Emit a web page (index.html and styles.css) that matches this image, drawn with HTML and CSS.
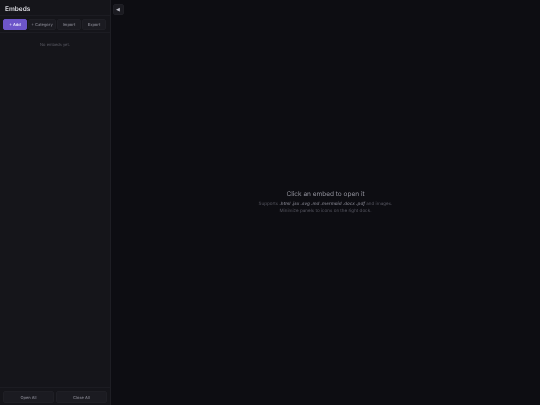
FILE: index.html
```html
<!DOCTYPE html>
<html lang="en">
<head>
<meta charset="utf-8">
<title>Embeds</title>
<link rel="stylesheet" href="styles.css">
</head>
<body>
<div class="app">
  <aside class="sidebar">
    <header class="side-head"><h1>Embeds</h1></header>
    <div class="toolbar">
      <button class="btn primary">+ Add</button>
      <button class="btn wide">+ Category</button>
      <button class="btn">Import</button>
      <button class="btn">Export</button>
    </div>
    <div class="list"><p class="empty">No embeds yet.</p></div>
    <footer class="side-foot">
      <button class="btn grow">Open All</button>
      <button class="btn grow">Close All</button>
    </footer>
  </aside>
  <main class="main">
    <button class="collapse">◀</button>
    <div class="center">
      <h2>Click an embed to open it</h2>
      <p>Supports <em>.html .jsx .svg .md .mermaid .docx .pdf</em> and images.</p>
      <p>Minimize panels to icons on the right dock.</p>
    </div>
  </main>
</div>
</body>
</html>
```
FILE: styles.css
```css
* { box-sizing: border-box; margin: 0; padding: 0; }
html, body { width: 540px; height: 405px; overflow: hidden; background: #0d0d12; }
body { font-family: Inter, "Liberation Sans", sans-serif; color: #e8e8ee; text-rendering: geometricPrecision; }
.app { zoom: 0.5; display: flex; width: 1080px; height: 810px; filter: blur(0.6px); }
.sidebar { width: 222px; flex: none; display: flex; flex-direction: column; background: #15151a; border-right: 1px solid #1e1e24; }
.side-head { height: 32px; padding: 10px 10px 0; border-bottom: 1px solid #1c1c22; }
.side-head h1 { font-size: 13px; font-weight: 600; line-height: 17px; color: #dcdce2; }
.toolbar { display: flex; gap: 2px; padding: 6px; height: 34px; border-bottom: 1px solid #1c1c22; }
.btn { height: 22px; flex: 0 0 48px; font: 500 8px Inter, "Liberation Sans", sans-serif; color: #82828c; background: #1b1b21; border: 1px solid #1f1f25; border-radius: 4px; text-rendering: geometricPrecision; }
.btn.primary { color: #f0ecff; background: #6d55c9; border-color: #6d55c9; }
.btn.wide { flex-basis: 56px; }
.list { flex: 1; }
.empty { padding-top: 18px; text-align: center; font-size: 8px; line-height: 10px; color: #5c5c66; }
.side-foot { display: flex; gap: 4px; padding: 6px 6px 0; height: 36px; border-top: 1px solid #1c1c22; }
.btn.grow { flex: 1; height: 24px; }
.main { position: relative; flex: 1; display: flex; align-items: center; justify-content: center; }
.collapse { position: absolute; left: 3px; top: 7px; width: 22px; height: 22px; font: 10px "DejaVu Sans", sans-serif; color: #b8b8c2; background: #1b1b21; border: 1px solid #1f1f25; border-radius: 4px; }
.center { text-align: center; }
.center h2 { font-size: 13px; font-weight: 400; line-height: 16px; color: #92929c; margin-bottom: 7px; }
.center p { font-size: 9.1px; line-height: 14px; color: #55555f; }
.center em { font-weight: 600; color: #72727c; }
```
